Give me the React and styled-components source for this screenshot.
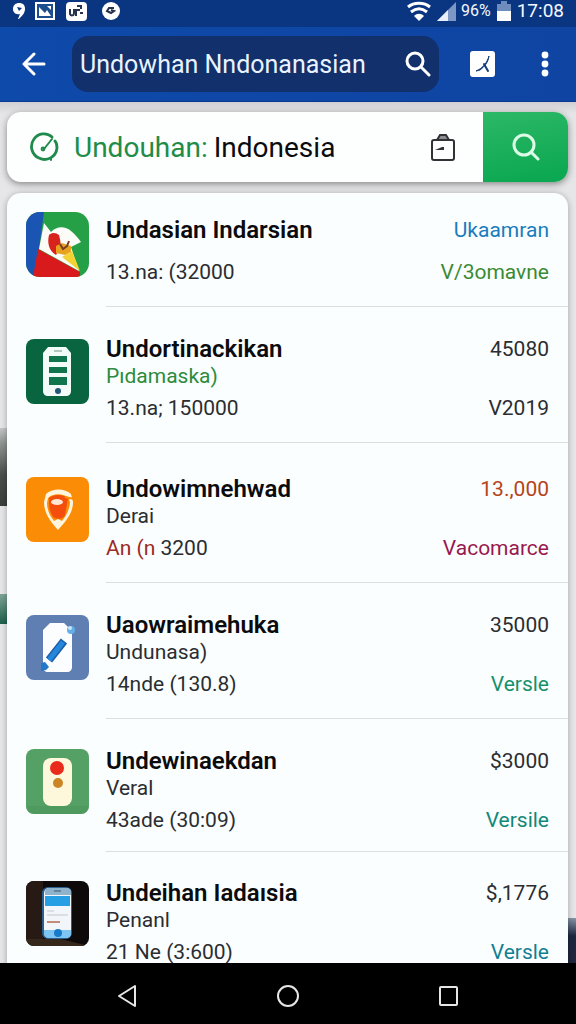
import React from "react";
import styled, { createGlobalStyle } from "styled-components";

const GlobalStyle = createGlobalStyle`
  *, *::before, *::after { box-sizing: border-box; }
  body {
    margin: 0;
    font-family: Roboto, "Liberation Sans", sans-serif;
    color: #0b0b0d;
    background: #e4e4e6;
  }
  button, input { font: inherit; color: inherit; border: 0; padding: 0; margin: 0; background: none; }
  button { cursor: pointer; }
  svg { display: block; }
`;

const Screen = styled.div`
  display: flex;
  flex-direction: column;
  height: 100vh;
`;

const StatusBar = styled.div`
  flex: none;
  display: flex;
  align-items: flex-start;
  justify-content: space-between;
  height: 27px;
  padding: 0 12px;
  color: #f4f8ff;
  background: #0a3580;
`;

const StatusGroup = styled.div`
  display: flex;
  align-items: center;
  height: 22px;
  gap: ${(p) => p.$gap}px;
`;

const StatusText = styled.span`
  font-size: ${(p) => p.$size}px;
  line-height: 24px;
`;

const AppBar = styled.header`
  flex: none;
  display: flex;
  align-items: center;
  height: 75px;
  padding-left: 12px;
  background: linear-gradient(90deg, #0e4aaa, #0f44a2);
  border-bottom: 1px solid #0a3a90;
  color: #fff;
`;

const IconButton = styled.button`
  flex: none;
  display: flex;
  align-items: center;
  justify-content: center;
  width: ${(p) => p.$width}px;
  height: 48px;
`;

const TitleField = styled.form`
  flex: 1;
  min-width: 0;
  display: flex;
  align-items: center;
  height: 56px;
  margin: 0 13px 0 16px;
  padding-left: 8px;
  border-radius: 16px;
  background: #11306c;
`;

const TitleInput = styled.input`
  flex: 1;
  min-width: 0;
  height: 40px;
  font-size: 25px;
  color: #eaf3ff;
  outline: none;
`;

const Main = styled.main`
  flex: 1;
  min-height: 0;
  overflow: hidden;
  display: flex;
  flex-direction: column;
  gap: 11px;
  padding: 10px 8px 0 7px;
  background:
    linear-gradient(#c4c7c6, #8d938f 20%, #4a4f4b 60%, #3a3f3b) 0 326px / 8px 78px no-repeat,
    linear-gradient(#7fa597, #1f5f4b) 0 492px / 8px 30px no-repeat,
    linear-gradient(#8795a5, #1c2740 30%, #23263c) 100% 816px / 9px 60px no-repeat,
    linear-gradient(#d0d0d4, #e6e6e8 12px);
`;

const SearchCard = styled.form`
  flex: none;
  display: flex;
  align-items: center;
  height: 70px;
  padding-left: 22px;
  border-radius: 14px;
  overflow: hidden;
  background: #fdfefe;
  box-shadow: 0 2px 7px rgba(0, 0, 0, 0.42);
`;

const SearchLabel = styled.label`
  flex: none;
  margin: 0 6px 0 15px;
  font-size: 28px;
  color: #218c48;
`;

const SearchInput = styled.input`
  flex: 1;
  min-width: 0;
  height: 44px;
  font-size: 28px;
  color: #0b0b0d;
  outline: none;
`;

const SubmitButton = styled.button`
  flex: none;
  display: flex;
  align-items: center;
  justify-content: center;
  width: 85px;
  height: 70px;
  margin-left: 16px;
  background: linear-gradient(170deg, #2cb866, #09a650);
`;

const ListCard = styled.ul`
  flex: 1 0 auto;
  margin: 0;
  padding: 0;
  list-style: none;
  border-radius: 14px 14px 0 0;
  background: #fafefe;
  box-shadow: 0 1px 6px rgba(0, 0, 0, 0.3);
`;

const Row = styled.li`
  display: flex;
  align-items: stretch;
  gap: 17px;
  padding-left: 19px;
`;

const AppIcon = styled.div`
  flex: none;
  width: 63px;
  height: 65px;
  margin-top: ${(p) => p.$top}px;
  border-radius: ${(p) => (p.$round ? 14 : 8)}px;
  overflow: hidden;
`;

const RowBody = styled.div`
  flex: 1;
  min-width: 0;
  padding: ${(p) => p.$top}px 19px ${(p) => p.$bottom}px 0;
  border-bottom: ${(p) => (p.$last ? "0" : "1px solid #dcdfe1")};
`;

const Line = styled.div`
  display: flex;
  justify-content: space-between;
  align-items: center;
  margin-top: ${(p) => p.$gap || 0}px;
`;

const Title = styled.h2`
  margin: 0;
  font-size: 24px;
  line-height: 28px;
  font-weight: 600;
  white-space: nowrap;
`;

const Text = styled.p`
  margin: 0;
  font-size: 21px;
  line-height: ${(p) => (p.$tight ? 22 : 26)}px;
  color: ${(p) => p.$color || "#2b2d31"};
  white-space: nowrap;
`;

const Accent = styled.span`
  color: #9c2b24;
`;

const NavBar = styled.nav`
  flex: none;
  display: flex;
  align-items: center;
  justify-content: center;
  height: 61px;
  padding-top: 4px;
  background: #000;
  gap: 98px;
`;

const art = {
  flag: (
    <svg width="63" height="65" viewBox="0 0 63 65">
      <path d="M0 0h63v65H0z" fill="#26a046" />
      <path d="M0 0h18l-5 37-4 28H0z" fill="#1b55b4" />
      <path d="M12 37l42 23v5H7z" fill="#d91a1c" />
      <path d="M18 11l7 9c6-6 14-6 20-1 4 3 7 7 10 11l-10 5 8 24-40-22z" fill="#fbfbf8" />
      <path d="M23 23c4-3 7-2 10 0 1 5 3 9 0 15l-3 5c-7-4-9-12-7-20z" fill="#d8231d" />
      <path d="M30 34l6-3 9 3v6l-6 3-9-2z" fill="#e7a31d" />
      <path d="M34 32l3 5 4-3 2-5" fill="none" stroke="#7b3e25" strokeWidth="2" />
      <path d="M36 45l10-6 8 20z" fill="#f3d334" />
    </svg>
  ),
  phone: (
    <svg width="63" height="65" viewBox="0 0 63 65">
      <path d="M0 0h63v65H0z" fill="#08653f" />
      <path d="M22 8h18l5 6v38c0 3-2 5-5 5H22c-3 0-5-2-5-5V14z" fill="#f2fbf7" />
      <path d="M28 12h8" stroke="#6d9684" strokeWidth="1" />
      <path d="M23 17h18v6H23zM23 28h18v6H23zM23 38h18v8H23z" fill="#10754d" />
      <circle cx="32" cy="52" r="3" fill="#24577a" />
    </svg>
  ),
  pin: (
    <svg width="63" height="65" viewBox="0 0 63 65">
      <path d="M0 0h63v65H0z" fill="#fb8c05" />
      <path d="M20 17c6-6 19-6 25 0l2 8c0 12-8 20-15 28-7-8-14-16-14-28z" fill="#fff5df" />
      <path d="M22 21c5-5 15-5 21 0l1 5c-1 8-4 13-8 18l-4-2-4 2c-4-5-7-11-7-18z" fill="#fb8c05" />
      <path d="M23 21c5-4 13-4 19 0l-3 17c-2 5-11 5-13 0-3-5-3-11-3-17z" fill="#f34e0c" />
      <path d="M39 20l9 2" stroke="#fb8c05" strokeWidth="2" />
      <ellipse cx="31" cy="25" rx="6" ry="3" fill="#ffe7d4" />
    </svg>
  ),
  note: (
    <svg width="63" height="65" viewBox="0 0 63 65">
      <path d="M0 0h63v65H0z" fill="#5f7fb2" />
      <path d="M24 8h14l8 8v36c0 3-2 5-5 5H22c-3 0-5-2-5-5V15z" fill="#fbfdff" />
      <path d="M23 45l15-19" stroke="#1c5ea9" strokeWidth="8" />
      <path d="M23 45l14-18" stroke="#2487dc" strokeWidth="5" />
      <circle cx="45" cy="15" r="4" fill="#64aee8" />
      <circle cx="44" cy="13" r="2" fill="#c9e4f7" />
      <path d="M15 48l4-1 4 5-3 3-5 1z" fill="#2478c9" />
    </svg>
  ),
  light: (
    <svg width="63" height="65" viewBox="0 0 63 65">
      <path d="M0 0h63v65H0z" fill="#55a064" />
      <path d="M0 57h63v8H0z" fill="#4a9559" opacity=".5" />
      <rect x="17" y="9" width="29" height="48" rx="8" fill="#fdf8dc" />
      <circle cx="31" cy="19" r="7" fill="#e92b1c" />
      <circle cx="32" cy="34" r="5" fill="#cc8525" />
    </svg>
  ),
  photo: (
    <svg width="63" height="65" viewBox="0 0 63 65">
      <path d="M0 0h63v65H0z" fill="#0d0a09" />
      <path d="M0 0h17v58H0z" fill="#271a14" />
      <path d="M0 58h35l28 7H0z" fill="#35271a" />
      <rect x="16" y="6" width="30" height="52" rx="6" fill="#2b5f94" />
      <rect x="18" y="7" width="27" height="50" rx="5" fill="#f2f6fa" />
      <path d="M19 11c0-3 2-4 4-4h17c3 0 5 1 5 4v3H19z" fill="#8fb3cb" />
      <path d="M28 10h7" stroke="#3b576c" strokeWidth="1" />
      <path d="M19 15h25v10H19z" fill="#269fe5" />
      <path d="M21 30h7M21 34h21" stroke="#c0c8cf" strokeWidth="1" />
      <path d="M21 41h13" stroke="#c58b7a" strokeWidth="2" />
      <path d="M18 49h27v3c0 3-2 5-5 5H23c-3 0-5-2-5-5z" fill="#7cc6f1" />
      <circle cx="32" cy="52" r="4" fill="#187bc9" />
    </svg>
  ),
};

const apps = [
  {
    art: "flag", round: true, iconTop: 19, top: 23, bottom: 23, metaGap: 17,
    title: "Undasian Indarsian", meta: "13.na: (32000",
    value: "Ukaamran", valueColor: "#197cbb", version: "V/3omavne", versionColor: "#3b8b34",
  },
  {
    art: "phone", iconTop: 32, top: 28, bottom: 23,
    title: "Undortinackikan", sub: "Pıdamaska)", subColor: "#2e8b3c", meta: "13.na; 150000",
    value: "45080", version: "V2019",
  },
  {
    art: "pin", iconTop: 34, top: 32, bottom: 23,
    title: "Undowimnehwad", sub: "Derai", accent: "An (n", meta: " 3200",
    value: "13.,000", valueColor: "#b5441b", version: "Vacomarce", versionColor: "#98194f",
  },
  {
    art: "note", iconTop: 32, top: 28, bottom: 23,
    title: "Uaowraimehuka", sub: "Undunasa)", meta: "14nde (130.8)",
    value: "35000", version: "Versle", versionColor: "#15906a",
  },
  {
    art: "light", iconTop: 30, top: 28, bottom: 20,
    title: "Undewinaekdan", sub: "Veral", meta: "43ade (30:09)",
    value: "$3000", version: "Versile", versionColor: "#118878",
  },
  {
    art: "photo", iconTop: 29, top: 27, bottom: 23,
    title: "Undeihan Iadaısia", sub: "Penanl", meta: "21 Ne (3:600)",
    value: "$,1776", version: "Versle", versionColor: "#117f91",
  },
];

function AppRow({ app, last }) {
  return (
    <Row>
      <AppIcon $top={app.iconTop} $round={app.round}>{art[app.art]}</AppIcon>
      <RowBody $top={app.top} $bottom={app.bottom} $last={last}>
        <Line>
          <Title>{app.title}</Title>
          <Text $color={app.valueColor}>{app.value}</Text>
        </Line>
        {app.sub && <Text $color={app.subColor}>{app.sub}</Text>}
        <Line $gap={app.metaGap || 8}>
          <Text $tight>
            {app.accent && <Accent>{app.accent}</Accent>}
            {app.meta}
          </Text>
          <Text $tight $color={app.versionColor}>{app.version}</Text>
        </Line>
      </RowBody>
    </Row>
  );
}

export default function App() {
  return (
    <Screen>
      <GlobalStyle />
      <StatusBar>
        <StatusGroup $gap={9}>
          <svg width="14" height="18" viewBox="0 0 14 18">
            <path d="M7 1c4 0 6 2 6 6 0 4-3 7-6 10H6l2-5c-5 1-7-2-7-5 0-4 3-6 6-6z" fill="#fff" />
            <path d="M5 5l5 1-3 3z" fill="#0a3580" />
          </svg>
          <svg width="20" height="18" viewBox="0 0 20 18">
            <path d="M1 1h18v16H1z" fill="#1c4d8d" stroke="#fff" strokeWidth="2" />
            <path d="M4 14V5l6 6 2-3 4 6zM12 4h4v4z" fill="#fff" />
          </svg>
          <svg width="24" height="20" viewBox="0 0 24 20">
            <rect x="2" y="1" width="21" height="19" rx="4" fill="#fff" />
            <path d="M6 8v5c1 2 4 2 4-1V8M12 15V9h4M13 5h5M17 4v4M16 12h3" fill="none" stroke="#27324c" strokeWidth="2" />
          </svg>
          <svg width="26" height="20" viewBox="0 0 26 20">
            <circle cx="14" cy="10" r="9" fill="#fff" />
            <path d="M17 7h-5l-2 3 4 2 3-2-3-1" fill="none" stroke="#27324c" strokeWidth="2" />
          </svg>
        </StatusGroup>
        <StatusGroup $gap={5}>
          <svg width="24" height="20" viewBox="0 0 24 20" fill="none" stroke="#fff" strokeWidth="3">
            <path d="M1 6c6-5 16-5 22 0M4 11c5-4 11-4 16 0" />
            <path d="M7 15c3-3 7-3 10 0l-5 5z" fill="#fff" stroke="none" />
          </svg>
          <svg width="20" height="20" viewBox="0 0 20 20">
            <path d="M20 1v19H1z" fill="#7d98c5" />
            <path d="M12 9v11H1z" fill="#e7effb" />
          </svg>
          <StatusText $size={16}>96%</StatusText>
          <svg width="16" height="20" viewBox="0 0 16 20">
            <path d="M5 0h6v3h4v8H1V3h4z" fill="#6e8dbc" />
            <path d="M1 10h14v10H1z" fill="#fff" />
          </svg>
          <StatusText $size={19}>17:08</StatusText>
        </StatusGroup>
      </StatusBar>

      <AppBar>
        <IconButton $width={44} aria-label="Back">
          <svg width="24" height="24" viewBox="0 0 24 24" fill="none" stroke="#fff" strokeWidth="3" strokeLinecap="round" strokeLinejoin="round">
            <path d="M22 12H3M12 2L2 12l10 10" />
          </svg>
        </IconButton>
        <TitleField onSubmit={(e) => e.preventDefault()}>
          <TitleInput aria-label="Search apps" defaultValue="Undowhan Nndonanasian" />
          <IconButton $width={42} aria-label="Search">
            <svg width="26" height="26" viewBox="0 0 26 26" fill="none" stroke="#fff" strokeWidth="3" strokeLinecap="round">
              <circle cx="10" cy="10" r="8" />
              <path d="M16 16l8 8" />
            </svg>
          </IconButton>
        </TitleField>
        <IconButton $width={62} aria-label="Open app">
          <svg width="26" height="26" viewBox="0 0 26 26">
            <rect width="25" height="26" rx="3" fill="#fff" />
            <path d="M19 5c-2 7-6 12-13 15l4-1c4-3 8-7 9-14z" fill="#123c7c" stroke="#123c7c" strokeWidth="1" />
            <path d="M14 13l4 7" stroke="#123c7c" strokeWidth="2" strokeLinecap="round" />
          </svg>
        </IconButton>
        <IconButton $width={62} aria-label="More options">
          <svg width="8" height="26" viewBox="0 0 8 26" fill="#fff">
            <circle cx="4" cy="4" r="3.4" />
            <circle cx="4" cy="13" r="3.4" />
            <circle cx="4" cy="22" r="3.4" />
          </svg>
        </IconButton>
      </AppBar>

      <Main>
        <SearchCard onSubmit={(e) => e.preventDefault()}>
          <svg width="30" height="30" viewBox="0 0 30 30" fill="none" stroke="#1f8a4c" strokeWidth="2.8" strokeLinecap="round">
            <path d="M23 5C18 0 9 1 5 7 0 14 3 23 10 26c8 4 17-1 18-10 0-3 0-5-2-7" />
            <path d="M15 17l8-10" strokeWidth="2" />
            <circle cx="14" cy="17" r="1" />
            <path d="M22 26v2" strokeWidth="2" />
          </svg>
          <SearchLabel htmlFor="download-query">Undouhan:</SearchLabel>
          <SearchInput id="download-query" defaultValue="Indonesia" />
          <IconButton $width={48} type="button" aria-label="Paste">
            <svg width="24" height="28" viewBox="0 0 24 28" fill="none" stroke="#303236" strokeWidth="2">
              <rect x="1" y="7" width="22" height="20" rx="2" />
              <path d="M6 7l3-5h6l3 5z" fill="#8a8d91" />
              <path d="M4 17l7-3h2v3z" fill="#303236" stroke="none" />
            </svg>
          </IconButton>
          <SubmitButton aria-label="Search downloads">
            <svg width="28" height="28" viewBox="0 0 28 28" fill="none" stroke="#dcfbe6" strokeWidth="3" strokeLinecap="round">
              <circle cx="12" cy="12" r="10" />
              <path d="M19 19l7 7" />
            </svg>
          </SubmitButton>
        </SearchCard>

        <ListCard>
          {apps.map((app, i) => (
            <AppRow key={app.art} app={app} last={i === apps.length - 1} />
          ))}
        </ListCard>
      </Main>

      <NavBar aria-label="System navigation">
        <IconButton $width={63} aria-label="Back">
          <svg width="20" height="24" viewBox="0 0 20 24" fill="none" stroke="#e6e6e6" strokeWidth="2" strokeLinejoin="round">
            <path d="M18 2v20L2 12z" />
          </svg>
        </IconButton>
        <IconButton $width={63} aria-label="Home">
          <svg width="24" height="24" viewBox="0 0 24 24" fill="none" stroke="#e6e6e6" strokeWidth="2">
            <circle cx="12" cy="12" r="10" />
          </svg>
        </IconButton>
        <IconButton $width={63} aria-label="Recent apps">
          <svg width="20" height="20" viewBox="0 0 20 20" fill="none" stroke="#e6e6e6" strokeWidth="2">
            <rect x="1" y="1" width="17" height="18" rx="1" />
          </svg>
        </IconButton>
      </NavBar>
    </Screen>
  );
}
